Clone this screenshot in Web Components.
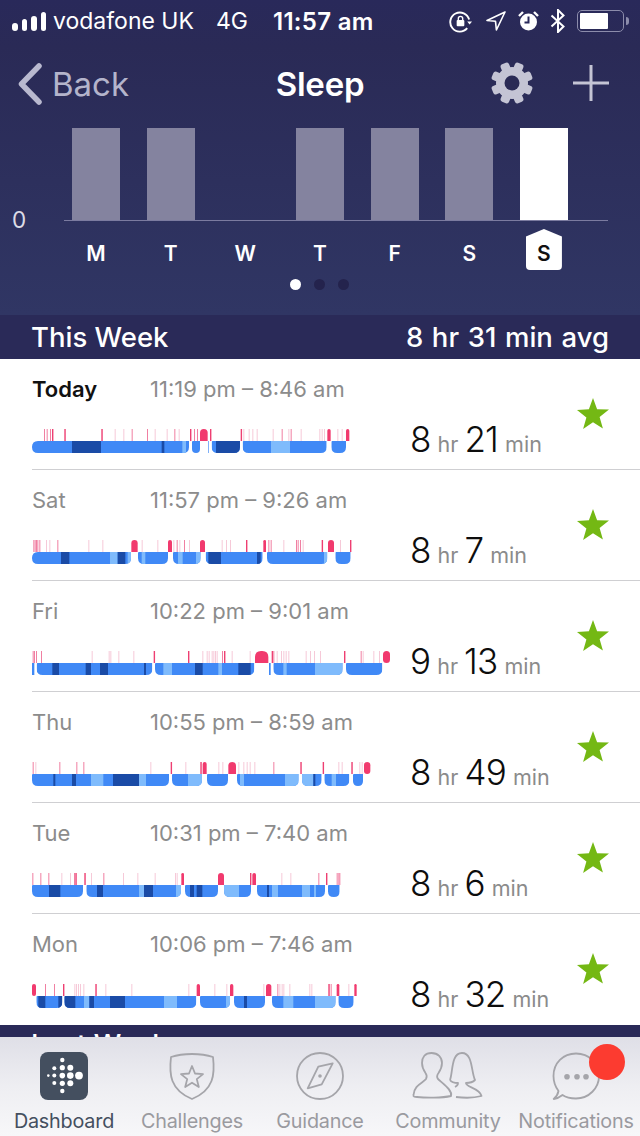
<!DOCTYPE html>
<html><head><meta charset="utf-8">
<style>
html,body{margin:0;padding:0;background:#fff}
body{width:640px;height:1136px;overflow:hidden;font-family:Inter,Lato,sans-serif;display:flex;flex-direction:column}
</style></head>
<body>
<sleep-app></sleep-app>
<script>
const C={d:'#1a4ba6',m:'#4089f6',l:'#7fbbfc'};
const ROWS=[
{day:'Today',bold:1,time:'11:19 pm – 8:46 am',h:'8',m:'21',
 segs:['36-507f|d156-243|d425-433|l487-498','516-540','564-566t','575-660|d588-660','668-920|l753-810','934-978'],
 ticks:'72 80 90 96p 133p 244p 284l 310l 335 381 404l 440l 463 476l 510p 522 531 570p 662p 670l 686l 697l 710l 758l 785 805l 812 842l 898l 905l 912l 952l 965l',
 blobs:'540-563 922-932 978-988'},
{day:'Sat',time:'11:57 pm – 9:26 am',h:'8',m:'7',
 segs:['36-333f|d123-148|l270-293|d293-316|l323-333','354-444|l365-376','459-542|l474-488|l528-542','557-728|d565-603|d711-722','741-922|l912-922','946-992'],
 ticks:'40 44 48 52 58 78l 88l 112 205l 247l 365l 412l 460l 470 478l 492 507l 605l 618l 630l 678p 745 752 790l 828 833 840 848l 905p 960l 990p',
 blobs:'334-353 444-456 540-555 730-738 924-942'},
{day:'Fri',time:'10:22 pm – 9:01 am',h:'9',m:'13',
 segs:['36-43t','50-397|d97-117|d197-213|d240-264|d372-378','405-703|l430-456|d525-548|l595-606|d655-692','747-752t','760-968|l790-800|l885-968','978-1087'],
 ticks:'38 42 48 63 215l 266l 271l 295l 340l 401p 504p 547l 560l 566l 575l 580l 585l 590l 606 612p 635l 689l 755p 760 770l 783l 790l 797l 805l 857l 870l 882l 900l 972p 1022 1028l 1060l 1077l',
 blobs:'705-745 1089-1110r'},
{day:'Thu',time:'10:55 pm – 8:59 am',h:'8',m:'49',
 segs:['36-447|d100-106|d156-168|l213-250|d279-357|l357-378','456-546|l504-546','561-624','651-836|l660-672|l795-836','846-905|l846-880|d880-886','913-988|l935-948','999-1029'],
 ticks:'38 46l 118 169 190 391l 452p 496l 541p 595l 607l 655l 670l 680l 689l 703l 760 841p 908p 955l 965l 994p 1018l 1025l',
 blobs:'548-560 625-648 1032-1051r'},
{day:'Tue',time:'10:31 pm – 7:40 am',h:'8',m:'6',
 segs:['36-189|d87-121','199-483|d231-249|l357-372|d372-399|l468-483','495-594|d510-522|d530-547','612-693|l612-657','711-915|d741-747|l756-774|l846-870|l882-888','924-959'],
 ticks:'37 61 85 124l 150l 162 166p 193p 213l 250 309l 352l 404l 465l 470l 690p 784l 811l 895 918p 950 955 958',
 blobs:'484-492 594-612 697-708'},
{day:'Mon',time:'10:06 pm – 7:46 am',h:'8',m:'32',
 segs:['49-127|d55-76|d115-127','133-529|d133-166|l192-208|d208-222|d270-315|l432-471','540-630|l618-630','642-735|d672-681','756-947|l790-820|l885-947','955-1001'],
 ticks:'75 102 129p 163l 168l 174l 180l 190l 226p 256l 334l 505l 583l 619l 730l 772 778l 785l 790l 808l 868l 874l 925p 932 985l',
 blobs:'36-48r 530-540 630-640 738-754 950-958 1003-1010'}
];
const off=z=>z/3-12;

class SleepChart extends HTMLElement{
 set data(r){
  let s='',defs='';
  r.segs.forEach((sg,i)=>{
    const parts=sg.split('|');
    let head=parts[0],first=head.endsWith('f'),thin=head.endsWith('t');
    head=head.replace(/[ft]$/,'');
    const [a,b]=head.split('-').map(Number),x=off(a),w=off(b)-x;
    if(thin){s+=`<rect x="${x}" y="12" width="${w}" height="12" fill="${C.m}"/>`;return;}
    const R=Math.min(6,w/2),x2=x+w,tl=first?6:1;
    const d=`M${x+tl} 12H${x2}V${24-R}Q${x2} 24 ${x2-R} 24H${x+R}Q${x} 24 ${x} ${24-R}V${12+tl}Q${x} 12 ${x+tl} 12Z`;
    defs+=`<clipPath id="c${i}"><path d="${d}"/></clipPath>`;
    let g=`<rect x="${x}" y="12" width="${w}" height="12" fill="${C.m}"/>`;
    parts.slice(1).forEach(p=>{
      const [u,v]=p.slice(1).split('-').map(Number);
      g+=`<rect x="${off(u)}" y="12" width="${off(v)-off(u)}" height="12" fill="${C[p[0]]}"/>`;
    });
    s+=`<g clip-path="url(#c${i})">${g}</g>`;
  });
  r.ticks.split(' ').forEach(t=>{
    const l=t.endsWith('l'),p=t.endsWith('p');
    const col=l?'#f6c9d8':p?'#ee3f72':'#f07fa2';
    s+=`<rect x="${off(parseFloat(t))}" y="0" width="${p?1.4:1}" height="12" fill="${col}"/>`;
  });
  r.blobs.split(' ').forEach(t=>{
    const round=t.endsWith('r');
    const [a,b]=t.replace('r','').split('-').map(Number),x=off(a),w=off(b)-x,R=Math.min(6,w/2);
    const bot=round?`V${12-R}Q${x+w} 12 ${x+w-R} 12H${x+R}Q${x} 12 ${x} ${12-R}`:`V12H${x}`;
    s+=`<path fill="#f13a6e" d="M${x} ${R}Q${x} 0 ${x+R} 0H${x+w-R}Q${x+w} 0 ${x+w} ${R}${bot}Z"/>`;
  });
  this.shadowRoot.innerHTML=`<style>:host{display:block;width:366px;height:24px}svg{display:block;overflow:visible}</style>
  <svg width="366" height="24" viewBox="0 0 366 24"><defs>${defs}</defs>${s}</svg>`;
 }
 constructor(){super();this.attachShadow({mode:'open'});}
}
customElements.define('sleep-chart',SleepChart);

class SleepRow extends HTMLElement{
 constructor(){super();this.attachShadow({mode:'open'});}
 set data(r){
  this.shadowRoot.innerHTML=`<style>
  :host{display:block;height:111px;box-sizing:border-box;padding-left:32px;background:#fff}
  .in{height:111px;box-sizing:border-box;border-bottom:1px solid #cfcfd2;display:grid;grid-template-columns:378px 1fr 62px;grid-template-rows:111px}
  :host(:last-child) .in{border-bottom:0}
  .l{display:flex;flex-direction:column}
  .top{display:flex;height:70px;padding-top:15px;box-sizing:border-box;font-size:22px;line-height:30px;color:#8c8c8c}
  .day{width:118px}.b{color:#111;font-weight:600}
  .dur{display:flex;align-items:baseline;height:111px;box-sizing:border-box;padding-top:55px;line-height:50px;color:#8b8b8b;font-size:21.5px}
  .dur b{font-weight:300;font-size:35px;color:#0d0d0d;letter-spacing:-.8px}
  .dur span{margin:0 6px 0 7px}
  svg{display:block;margin:38px 0 0 -2px}
  </style><div class="in"><div class="l"><div class="top"><div class="day ${r.bold?'b':''}">${r.day}</div><div>${r.time}</div></div><sleep-chart></sleep-chart></div>
  <div class="dur"><b>${r.h}</b><span>hr</span><b>${r.m}</b><span>min</span></div>
  <svg width="34" height="34" viewBox="0 0 34 34"><path fill="#74b814" d="M17 1l4.1 11.2 11.9.4-9.4 7.3 3.3 11.5L17 25.2 7.1 31.9l3.3-11.5L1 13.1l11.9-.9z"/></svg></div>`;
  this.shadowRoot.querySelector('sleep-chart').data=r;
 }
}
customElements.define('sleep-row',SleepRow);

class StatusBar extends HTMLElement{
 constructor(){super();this.attachShadow({mode:'open'}).innerHTML=`<style>
 :host{display:flex;height:42px;align-items:center;color:#fff;font-size:23px;box-sizing:border-box;padding-left:12px;position:relative}
 .sig{display:flex;align-items:flex-end;gap:4px;height:19px}
 .sig i{display:block;width:5.5px;background:#fff;border-radius:3px}
 span{white-space:nowrap}
 .icons{display:flex;align-items:center;margin-left:auto;padding-right:11px}
 svg{display:block}
 </style>
 <div class="sig"><i style="height:8px"></i><i style="height:12px"></i><i style="height:15px"></i><i style="height:19px"></i></div>
 <span style="margin-left:7px">vodafone UK</span>
 <span style="margin-left:22px">4G</span>
 <span style="margin-left:25px;font-weight:600;font-size:24px;letter-spacing:.3px">11:57 am</span>
 <div class="icons">
 <svg width="23" height="23" viewBox="0 0 24 24" fill="none" stroke="#fff" stroke-width="2"><path d="M21 10A10 10 0 1 0 19 19"/><path fill="#fff" stroke="none" d="M19 12h5l-2.5 3z"/><rect x="8" y="10.5" width="8" height="6.5" rx="1" fill="#fff" stroke="none"/><path d="M9.7 10.5V9a2.3 2.3 0 0 1 4.6 0v1.5" stroke-width="1.4"/></svg>
 <svg style="margin-left:14px" width="20" height="20" viewBox="0 0 20 20" fill="none" stroke="#fff" stroke-width="1.6" stroke-linejoin="round"><path d="M19 1L1 9.5l8.5.8.9 8.7z"/></svg>
 <svg style="margin-left:12px" width="21" height="22" viewBox="0 0 21 22"><circle cx="10.5" cy="12" r="8.5" fill="#fff"/><path d="M10.5 6.5V12.5H6.5" fill="none" stroke="#29295a" stroke-width="2"/><path d="M1 6l4-4M20 6l-4-4" stroke="#fff" stroke-width="2.4"/></svg>
 <svg style="margin-left:11px" width="16" height="24" viewBox="0 0 16 24" fill="none" stroke="#fff" stroke-width="2"><path d="M1.5 6.5l12 11L8 23V1l5.500 5.500-12 11"/></svg>
 <div style="margin-left:11px;width:47px;height:22px;box-sizing:border-box;border:1.5px solid #8c8cab;border-radius:5px;padding:2px;display:flex"><div style="width:28px;background:#fff;border-radius:1px"></div></div>
 <div style="width:3px;height:8px;background:#8c8cab;margin-left:2px;border-radius:0 3px 3px 0"></div>
 </div>`;}
}
customElements.define('status-bar',StatusBar);

class TopNav extends HTMLElement{
 constructor(){super();
 let teeth='';for(let i=0;i<8;i++)teeth+=`<rect x="17.5" y="1" width="9" height="10" rx="2.500" transform="rotate(${i*45+22.5} 22 22)"/>`;
 this.attachShadow({mode:'open'}).innerHTML=`<style>
 :host{display:grid;grid-template-columns:1fr auto 1fr;align-items:center;height:84px;margin-bottom:2px;color:#fff;box-sizing:border-box;padding:0 18px}
 .back{display:flex;align-items:center;gap:10px;color:#b4b4cb;font-size:33px}
 .t{font-size:33px;font-weight:600;letter-spacing:-.2px}
 .r{display:flex;justify-content:flex-end;align-items:center;gap:39px;margin:0 13px 2px 0}
 svg{display:block}
 </style>
 <div class="back"><svg width="24" height="42" viewBox="0 0 24 42" fill="none" stroke="#b9b9cf" stroke-width="5.5" stroke-linecap="round" stroke-linejoin="round"><path d="M21 3L3.500 21 21 39"/></svg><span>Back</span></div>
 <div class="t">Sleep</div>
 <div class="r"><svg width="44" height="44" viewBox="0 0 44 44" fill="#c4c4d4"><g>${teeth}</g><circle cx="22" cy="22" r="16"/><circle cx="22" cy="22" r="7.500" fill="#2a2a55"/></svg>
 <svg width="36" height="36" viewBox="0 0 36 36" stroke="#c4c4d4" stroke-width="3"><path d="M18 0V36M0 18H36"/></svg></div>`;}
}
customElements.define('top-nav',TopNav);

class WeekChart extends HTMLElement{
 constructor(){super();
 const days=[['M',1],['T',1],['W',0],['T',1],['F',1],['S',1],['S',2]];
 this.attachShadow({mode:'open'}).innerHTML=`<style>
 :host{display:block;height:187px;color:#fff;position:relative;box-sizing:border-box}
 .plot{margin:0 32px 0 64px;height:92px;border-bottom:1px solid #7b7ba0;display:grid;grid-template-columns:repeat(7,48px);column-gap:26.67px;padding-left:8px;align-items:end;box-sizing:content-box}
 .plot i{display:block;height:92px;background:#84839f}
 .plot i.n{background:none}.plot i.a{background:#fff}
 .zero{position:absolute;left:12px;top:79px;font-size:22.5px;line-height:26px;color:#dcdce6}
 .labs{margin:8px 0 0 58.67px;display:grid;grid-template-columns:repeat(7,74.67px);height:41px;font-size:21px;font-weight:600;text-align:center;line-height:50px}
 .labs div{position:relative}
 .tag{width:36px;height:41px;margin:0 auto;background:#fff;color:#111;clip-path:polygon(50% 0,100% 18%,100% 100%,0 100%,0 18%);border-radius:0 0 4px 4px;}
 .dots{display:flex;justify-content:center;gap:13px;margin-top:9px;padding-right:2px}
 .dots i{width:11px;height:11px;border-radius:50%;background:#24234d}
 .dots i:first-child{background:#fff}
 </style>
 <div class="zero">0</div>
 <div class="plot">${days.map(d=>`<i class="${d[1]==0?'n':d[1]==2?'a':''}"></i>`).join('')}</div>
 <div class="labs">${days.map(d=>`<div>${d[1]==2?`<div class="tag">${d[0]}</div>`:d[0]}</div>`).join('')}</div>
 <div class="dots"><i></i><i></i><i></i></div>`;}
}
customElements.define('week-chart',WeekChart);

class WeekHead extends HTMLElement{
 constructor(){super();this.attachShadow({mode:'open'}).innerHTML=`<style>
 :host{display:flex;justify-content:space-between;align-items:center;box-sizing:border-box;height:44px;padding:0 31px;background:#2a2a58;color:#fff;font-size:27.5px;font-weight:500;white-space:nowrap;overflow:hidden}
 :host(.clip){height:12px;align-items:flex-start}
 :host(.clip) div{margin-top:2px}
 .w{word-spacing:1.3px}
 </style><div><slot></slot></div><div class="w"><slot name="r"></slot></div>`;}
}
customElements.define('week-head',WeekHead);

class TabItem extends HTMLElement{
 constructor(){super();this.attachShadow({mode:'open'}).innerHTML=`<style>
 :host{display:flex;flex-direction:column;align-items:center;width:128px;color:#9a9a9f;font-size:19.8px;letter-spacing:-.2px;padding-top:14px;box-sizing:border-box;white-space:nowrap}
 :host([on]){color:#444f5f}
 .i{height:50px;display:flex;align-items:center}
 .n{line-height:26px;margin-top:7px}
 </style><div class="i"><slot name="icon"></slot></div><div class="n"><slot></slot></div>`;}
}
customElements.define('tab-item',TabItem);

class TabBar extends HTMLElement{
 constructor(){super();this.attachShadow({mode:'open'}).innerHTML=`<style>
 :host{display:flex;height:99px;background:linear-gradient(#dfdfe7,#eeeef2 50%,#f7f7f9);position:relative;overflow:hidden}
 .b{position:absolute;left:589px;top:7px;width:36px;height:36px;border-radius:50%;background:#fc3b30}
 </style><slot></slot><div class="b"></div>`;}
}
customElements.define('tab-bar',TabBar);

class SleepApp extends HTMLElement{
 constructor(){super();
 const dots=[[48.3,55.6,1.3],[54.3,48.3,2],[54.3,55.6,2],[54.3,63,2],[62.3,40,2.2],[62.3,47.700,2.6],[62.3,55.6,2.800],[62.3,63.300,2.6],[62.3,71,2.2],[70.3,47.700,3],[70.3,55.6,3.300],[70.3,63.300,3],[79,55.6,3.900]];
 const dotSvg=dots.map(d=>`<circle cx="${d[0]-40}" cy="${d[1]-32}" r="${d[2]}" fill="#fff"/>`).join('');
 this.attachShadow({mode:'open'}).innerHTML=`<style>
 :host{display:flex;flex-direction:column;width:640px;height:1136px;overflow:hidden;font-family:Inter,Lato,sans-serif}
 .hero{background:linear-gradient(#29295a 0%,#2a2a56 15%,#303664 100%);height:315px}
 svg{display:block}
 </style>
 <div class="hero"><status-bar></status-bar><top-nav></top-nav><week-chart></week-chart></div>
 <week-head>This Week<span slot="r">8 hr 31 min avg</span></week-head>
 <div id="rows"></div>
 <week-head class="clip">Last Week</week-head>
 <tab-bar>
  <tab-item on><svg slot="icon" width="48" height="48" viewBox="0 0 48 48"><rect width="48" height="48" rx="8" fill="#444f5f"/>${dotSvg}</svg>Dashboard</tab-item>
  <tab-item><svg slot="icon" width="48" height="48" viewBox="0 0 48 48" fill="none" stroke="#a5a5aa" stroke-width="1.800" stroke-linejoin="round"><path d="M3 5C15 1 33 1 45 5C47 22 46 38 24 47C2 38 1 22 3 5Z"/><path d="M24 14l3 7.500 8 .6-6.200 5 2 7.900-6.800-4.300-6.800 4.300 2-7.900-6.200-5 8-.6z"/></svg>Challenges</tab-item>
  <tab-item><svg slot="icon" width="48" height="48" viewBox="0 0 48 48" fill="none" stroke="#a5a5aa" stroke-width="1.800" stroke-linejoin="round"><circle cx="24" cy="24" r="23"/><path d="M36.700 11.300L22.300 14.700 11.700 36.300 25.700 32.300z"/><circle cx="24" cy="24" r="1.800" fill="#a5a5aa" stroke="none"/></svg>Guidance</tab-item>
  <tab-item><svg slot="icon" width="72" height="48" viewBox="0 0 72 48" fill="none" stroke="#a5a5aa" stroke-width="1.800" stroke-linejoin="round"><path d="M19.500 1C13 1 10 5.500 10 11C10 15 11.500 18 13.500 21C15 23 15 25 14 27C11 31 2 33 1.500 43C1 45 3 45 5 45C14 46 30 46 39 44C41 38 30 31 26 27C24.500 25 25 23 26.500 21C28.500 18 30 15 30 11C30 5.500 26 1 19.500 1Z"/><path d="M38 28C41 20 39 1 50 1C61 1 59 20 63 28C60 31 56 31 54 31C53 35 68 36 69.500 44C62 46 52 46 44 45"/><path d="M38 28C40 31 44 31 46 31C46 33 45 34 43 35"/></svg>Community</tab-item>
  <tab-item><svg slot="icon" width="48" height="48" viewBox="0 0 48 48" fill="none" stroke="#a5a5aa" stroke-width="1.800" stroke-linejoin="round"><path d="M24 1.500C11 1.500 1.500 11 1.500 24C1.500 30 3.500 35 6.500 39C6 42 4 45 1.700 47C5 46.500 8 45 10.500 43C14 45.500 19 46.500 24 46.500C37 46.500 47 36 47 24C47 11 37 1.500 24 1.500Z"/><g fill="#a5a5aa" stroke="none"><circle cx="15" cy="24.700" r="2.800"/><circle cx="25" cy="24.700" r="2.800"/><circle cx="34" cy="24.700" r="2.800"/></g></svg>Notifications</tab-item>
 </tab-bar>`;
 const host=this.shadowRoot.getElementById('rows');
 ROWS.forEach(r=>{const e=document.createElement('sleep-row');host.appendChild(e);e.data=r;});
 }
}
customElements.define('sleep-app',SleepApp);
</script>
</body></html>
